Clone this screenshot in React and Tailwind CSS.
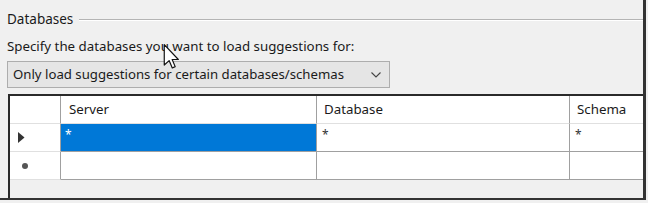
import React from "react";

function Cursor() {
  return (
    <svg
      className="absolute left-[163px] top-[44px]"
      width="17"
      height="25"
      viewBox="0 0 12 19"
    >
      <path
        d="M0.5 0.5 L0.5 16 L4.2 12.6 L6.6 18.2 L8.8 17.2 L6.5 11.8 L11.2 11.8 Z"
        fill="#ffffff"
        stroke="#111"
        strokeWidth="0.9"
        strokeLinejoin="round"
      />
    </svg>
  );
}

export default function App() {
  const font = { fontFamily: '"Noto Sans", "Open Sans", sans-serif' };
  return (
    <div
      className="relative w-[648px] h-[203px] bg-[#f0f0f0] overflow-hidden text-[#1a1a1a]"
      style={font}
    >
      <div className="w-[646px] h-[200px] border-r-[3px] border-b-[2px] border-[#333] flex flex-col">
        {/* group legend */}
        <div className="flex items-center h-[27px] pt-[13px] pl-[7px]">
          <span className="text-[13.5px] leading-none">Databases</span>
          <div className="flex-1 ml-[6px] h-[2px] border-t border-[#b4b4b4] border-b border-b-white" />
        </div>
        <div className="pl-[7px] mt-[10px] text-[13.3px] leading-[18px]">
          Specify the databases you want to load suggestions for:
        </div>
        <div className="ml-[7px] mt-[6px] w-[383px] h-[27px] bg-[#e5e5e5] border border-[#adadad] flex items-center pl-[5px] pr-[8px]">
          <span className="flex-1 text-[13.2px] leading-none">
            Only load suggestions for certain databases/schemas
          </span>
          <svg width="10" height="6" viewBox="0 0 10 6">
            <path d="M0.5 0.5 L5 5 L9.5 0.5" fill="none" stroke="#444" strokeWidth="1.1" />
          </svg>
        </div>
        {/* grid */}
        <div className="ml-[8px] mt-[6px] flex-1 border-l-2 border-t-2 border-[#2a2a2a] bg-[#f0f0f0] flex flex-col">
          <div className="grid grid-cols-[51px_256px_253px_1fr] bg-white text-[13.3px]">
            {/* header */}
            <div className="h-[28px] border-r border-[#a0a0a0] border-b border-b-[#e0e0e0]" />
            <div className="h-[28px] border-r border-[#a0a0a0] border-b border-b-[#e0e0e0] flex items-center pl-[8px]">Server</div>
            <div className="h-[28px] border-r border-[#a0a0a0] border-b border-b-[#e0e0e0] flex items-center pl-[7px]">Database</div>
            <div className="h-[28px] border-b border-b-[#e0e0e0] flex items-center pl-[7px]">Schema</div>
            {/* row 1 */}
            <div className="h-[28px] border-r border-[#a0a0a0] border-b border-b-[#e0e0e0] flex items-center pl-[8px]">
              <svg width="7" height="11" viewBox="0 0 7 11">
                <path d="M0 0 L6.5 5.5 L0 11 Z" fill="#333" />
              </svg>
            </div>
            <div className="h-[28px] bg-[#0078d7] border-r border-[#a0a0a0] border-b border-b-[#a0a0a0] flex items-start pt-[5px] pl-[4px] text-white text-[12px] leading-none">*</div>
            <div className="h-[28px] border-r border-[#a0a0a0] border-b border-b-[#a0a0a0] flex items-start pt-[5px] pl-[5px] text-[12px] leading-none text-[#333]">*</div>
            <div className="h-[28px] border-b border-b-[#a0a0a0] flex items-start pt-[5px] pl-[5px] text-[12px] leading-none text-[#333]">*</div>
            {/* row 2 */}
            <div className="h-[28px] border-r border-[#a0a0a0] border-b border-b-[#e0e0e0] flex items-center pl-[12px]">
              <span className="block w-[6px] h-[6px] rounded-full bg-[#555]" />
            </div>
            <div className="h-[28px] border-r border-[#a0a0a0] border-b border-b-[#a0a0a0]" />
            <div className="h-[28px] border-r border-[#a0a0a0] border-b border-b-[#a0a0a0]" />
            <div className="h-[28px] border-b border-b-[#a0a0a0]" />
          </div>
        </div>
      </div>
      <Cursor />
    </div>
  );
}
